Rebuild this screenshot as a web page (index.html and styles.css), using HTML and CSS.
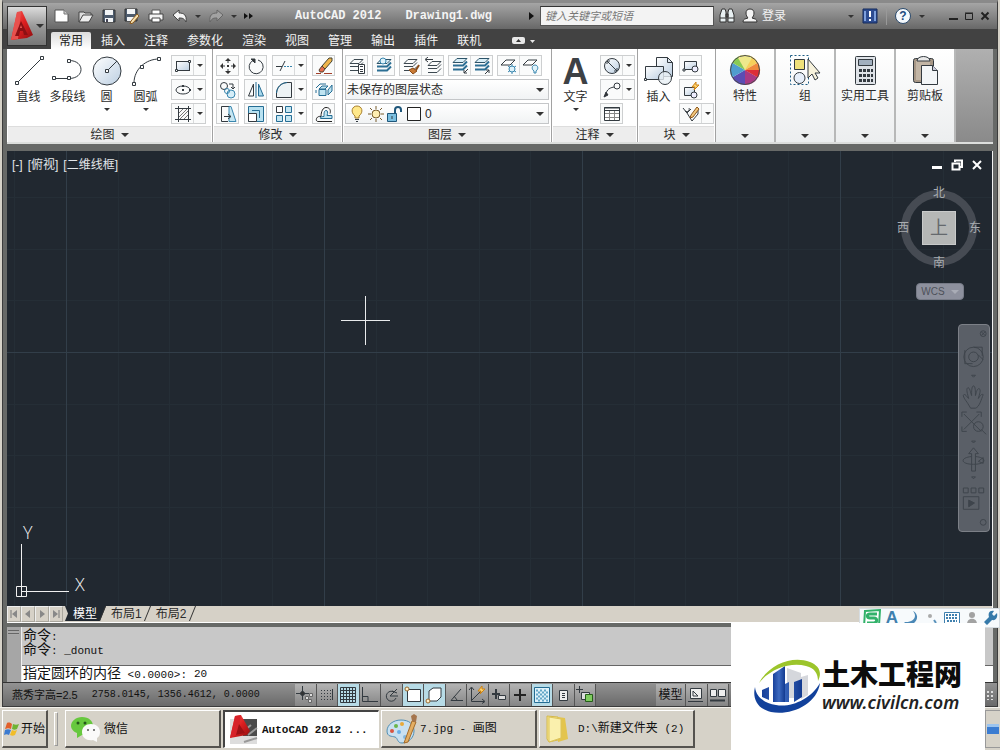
FILE: index.html
```html
<!DOCTYPE html>
<html lang="zh-CN">
<head>
<meta charset="utf-8">
<meta name="viewport" content="width=device-width, initial-scale=1">
<title>AutoCAD 2012 Drawing1.dwg</title>
<link rel="stylesheet" href="styles.css">
</head>
<body>
<svg class="defs" aria-hidden="true">
  <defs>
    <linearGradient id="blue" x1="0" y1="0" x2="1" y2="1"><stop offset="0" stop-color="#fff"/><stop offset="1" stop-color="#bccfe2"/></linearGradient>
    <linearGradient id="red" x1="0" y1="0" x2="1" y2="1"><stop offset="0" stop-color="#ff6058"/><stop offset=".5" stop-color="#dc1f20"/><stop offset="1" stop-color="#8d0d10"/></linearGradient>
    <linearGradient id="deep" x1="0" y1="0" x2="1" y2="0"><stop offset="0" stop-color="#17409a"/><stop offset=".5" stop-color="#3d6ac0"/><stop offset="1" stop-color="#123a90"/></linearGradient>
    <symbol id="layers" viewBox="0 0 18 18"><path d="M6 2.500h9l-4 4H2zM2 9.500h9l4-4M2 13.500h9l4-4" fill="none" stroke="#3c4850"/></symbol>
    <symbol id="layersblue" viewBox="0 0 18 18"><path d="M6 2.500h10l-4 4H2z" fill="#d8eef7" stroke="#2c5368"/><path d="M2 9.500h10l4-4M2 13.500h10l4-4" fill="none" stroke="#2c6f94" stroke-width="2"/></symbol>
  </defs>
</svg>

<div class="window">
  <header class="head">
    <button class="app-button" aria-label="应用程序菜单">
      <svg width="24" height="34" viewBox="0 0 24 34"><path d="M7 3l5-1 11 24-6 3-8 1-8 1z" fill="url(#red)"/><path d="M7 3l4 0-3 27-7 1z" fill="#e8504d"/><path d="M11 12l7 14h-4l-1-4h-3l-1 5H5z" fill="#8c1014"/><path d="M11 16l1 3h-2z" fill="#f06058"/></svg>
      <i class="down"></i>
    </button>
    <div class="title-bar">
      <div class="quick">
        <button aria-label="新建"><svg width="16" height="14" viewBox="0 0 16 14"><path d="M1 1h9l4 4v8H1z" fill="#fff" stroke="#555"/><path d="M10 1v4h4" fill="#ccc" stroke="#777"/></svg></button>
        <button aria-label="打开"><svg width="16" height="14" viewBox="0 0 16 14"><path d="M1 13V3h5l1 1h6v3" fill="#ddd" stroke="#444"/><path d="M1 13l4-7h10l-4 7z" fill="#eee" stroke="#444"/></svg></button>
        <button aria-label="保存"><svg width="14" height="14" viewBox="0 0 14 14"><path d="M1 1h12v12H1z" fill="#4d5b6d" stroke="#333"/><path d="M3 1h8v5H3zM3 9h8v4H3z" fill="#f2f4f6"/><path d="M4 10h2v3H4z" fill="#445"/></svg></button>
        <button aria-label="另存为"><svg width="16" height="16" viewBox="0 0 16 16"><path d="M1 1h12v12H1z" fill="#4d5b6d" stroke="#333"/><path d="M3 1h8v5H3zM3 9h8v4H3z" fill="#f2f4f6"/><path d="M7 13l6-7 2 2-6 7-3 1z" fill="#f4dfae" stroke="#8a5a20"/></svg></button>
        <button aria-label="打印"><svg width="16" height="14" viewBox="0 0 16 14"><path d="M4 1h8v5H4z" fill="#fff" stroke="#555"/><path d="M1 5h14v6H1z" fill="#f3f3f3" stroke="#444"/><path d="M4 9h8v4H4z" fill="#fff" stroke="#444"/></svg></button>
        <button aria-label="放弃"><svg width="16" height="14" viewBox="0 0 16 14"><path d="M1 6l6-5v3c5 0 8 2 7 9-2-4-4-4-7-4v3z" fill="#f4f4f4" stroke="#444"/></svg></button>
        <i class="down tiny"></i>
        <button aria-label="重做"><svg width="16" height="14" viewBox="0 0 16 14"><path d="M15 6L9 1v3C4 4 1 6 2 13c2-4 4-4 7-4v3z" fill="#a2a2a2" stroke="#666"/></svg></button>
        <i class="down tiny"></i>
        <button aria-label="更多"><svg width="9" height="8" viewBox="0 0 9 8"><path d="M0 1l4 3-4 3zM5 1l4 3-4 3z" fill="#111"/></svg></button>
      </div>
      <h1 class="title"><span>AutoCAD 2012</span><span>Drawing1.dwg</span></h1>
      <i class="right"></i>
      <input class="search" type="search" aria-label="搜索" placeholder="键入关键字或短语">
      <div class="account">
        <button aria-label="查找"><svg width="16" height="16" viewBox="0 0 16 16"><path d="M3 1h3l1 3v10H1V7zM10 1h3l2 6v7H9V4z" fill="#e8f0f2" stroke="#333"/><path d="M7 6h2v3H7zM1 10h6M9 10h6" fill="#555" stroke="#333"/></svg></button>
        <button class="login"><svg width="16" height="16" viewBox="0 0 16 16"><path d="M8 1c3 0 4 2 4 4s-1 4-2 5c3 1 5 1 5 4H1c0-3 2-3 5-4-1-1-2-3-2-5s1-4 4-4z" fill="#f4f4f4" stroke="#333"/></svg>登录</button>
      </div>
      <div class="help">
        <i class="down tiny"></i>
        <button aria-label="交换"><svg width="16" height="16" viewBox="0 0 16 16"><path d="M1 1h14v14H1z" fill="#2d4c91" stroke="#152a5c"/><path d="M3 3v10M13 3v10" stroke="#7da0dd" stroke-width="2"/><path d="M7 3h2v6H7zM7 11h2v2H7z" fill="#fff"/></svg></button>
        <i class="bar"></i>
        <button class="ask" aria-label="帮助">?</button>
        <i class="down tiny"></i>
      </div>
      <div class="win-controls">
        <button aria-label="最小化"><svg width="10" height="10"><path d="M1 8h9" stroke="#222" stroke-width="2"/></svg></button>
        <button aria-label="最大化"><svg width="10" height="10"><path d="M1.500 2.500h7v6h-7zM1 2h8" fill="none" stroke="#222"/></svg></button>
        <button aria-label="关闭"><svg width="10" height="10"><path d="M1.500 1.500l7 7M8.500 1.500l-7 7" stroke="#222" stroke-width="2"/></svg></button>
      </div>
    </div>
    <nav class="tabs">
      <button class="tab current">常用</button><button class="tab">插入</button><button class="tab">注释</button><button class="tab">参数化</button><button class="tab">渲染</button><button class="tab">视图</button><button class="tab">管理</button><button class="tab">输出</button><button class="tab">插件</button><button class="tab">联机</button>
      <button class="fold" aria-label="最小化功能区"><svg width="26" height="10" viewBox="0 0 26 10"><rect x="1" y="1" width="13" height="7" rx="2" fill="#e8e8e8"/><path d="M5 6l2.500-3L10 6z" fill="#333"/><path d="M19 4h5l-2.500 3z" fill="#e8e8e8"/></svg></button>
    </nav>
  </header>

  <section class="ribbon">
    <div class="panel">
      <div class="panel-body">
        <button class="big"><svg width="32" height="32" viewBox="0 0 32 32" class="ln"><path d="M4 28L29 3"/><path class="n" d="M2.500 26.500h3v3h-3zM27.500 1.500h3v3h-3z"/></svg>直线</button>
        <button class="big"><svg width="32" height="32" viewBox="0 0 32 32" class="ln"><path d="M2 23.500h15c16 0 16-18 0-18"/><path class="n" d="M.500 21.500h3v3h-3zM15.500 21.500h3v3h-3zM15.500 4.500h3v3h-3z"/></svg>多段线</button>
        <button class="big"><svg width="32" height="32" viewBox="0 0 32 32" class="ln"><circle cx="16" cy="16" r="14" fill="url(#blue)"/><path d="M16 16L26 6"/><path class="n" d="M14.500 14.500h3v3h-3z"/></svg>圆<i class="down tiny"></i></button>
        <button class="big"><svg width="32" height="32" viewBox="0 0 32 32" class="ln"><path d="M4 28C4 14 16 4 29 4"/><path class="n" d="M2.500 27.500h3v3h-3zM10.500 10.500h3v3h-3zM27.500 2.500h3v3h-3z"/></svg>圆弧<i class="down tiny"></i></button>
        <div class="stack">
          <span class="split"><button aria-label="矩形"><svg width="18" height="18" class="ln"><rect x="2.500" y="4.500" width="13" height="9" fill="url(#blue)"/><path class="n" d="M1.500 12.500h2v2h-2zM14.500 3.500h2v2h-2z"/></svg></button><button aria-label="矩形选项"><i class="down tiny"></i></button></span>
          <span class="split"><button aria-label="椭圆"><svg width="18" height="18" class="ln"><ellipse cx="9" cy="9" rx="7" ry="4"/><path d="M8 9h2M9 8v2M16 8v2M8 5h2" stroke-width="2"/></svg></button><button aria-label="椭圆选项"><i class="down tiny"></i></button></span>
          <span class="split"><button aria-label="图案填充"><svg width="18" height="18" class="ln"><path d="M4.500 1v16M14.500 1v16M1 3.500h16M1 14.500h16"/><path d="M5 8l4-4M5 12l8-8M6 14l8-8M10 14l4-4" stroke="#777"/></svg></button><button aria-label="填充选项"><i class="down tiny"></i></button></span>
        </div>
      </div>
      <button class="panel-name">绘图 <i class="down"></i></button>
    </div>

    <div class="panel">
      <div class="panel-body modify">
        <div class="stack">
          <span class="split"><button aria-label="移动"><svg width="18" height="18" class="ln"><path d="M9 2v4M9 12v4M2 9h4M12 9h4"/><path d="M9 1l3 3H6zM9 17l3-3H6zM1 9l3-3v6zM17 9l-3-3v6zM8 8h2v2H8z" fill="#333" stroke="none"/></svg></button></span>
          <span class="split"><button aria-label="复制"><svg width="18" height="18" class="ln"><circle cx="5" cy="5" r="3.500"/><circle cx="12" cy="13" r="4" stroke="#3986ae" fill="#d6eef8"/><circle cx="8" cy="10" r="2.500" stroke="#3986ae"/><path d="M10 3h4v4M12 6l2 2 2-2"/></svg></button></span>
          <span class="split"><button aria-label="拉伸"><svg width="18" height="18" class="ln"><path d="M10 1.500H2.500v15H9"/><path d="M10 1.500h2l5 15h-7z" fill="#c5e6f2" stroke="#3986ae"/><path d="M5 11.500h7M9 9l3 2.500L9 14"/></svg></button></span>
        </div>
        <div class="stack">
          <span class="split"><button aria-label="旋转"><svg width="18" height="18" class="ln"><path d="M6 3.500a7 7 0 1 0 5-.500"/><path d="M4 2h4v4z" fill="#333"/></svg></button></span>
          <span class="split"><button aria-label="镜像"><svg width="18" height="18" class="ln"><path d="M6.500 3v12H1.500z"/><path d="M11.500 3v12h5z" fill="#a8d8ec" stroke="#246d94"/><path d="M9 1v16" stroke="#246d94"/></svg></button></span>
          <span class="split"><button aria-label="缩放"><svg width="18" height="18" class="ln"><path d="M1.500 1.500h15v15h-15z" fill="#b9e2f1" stroke="#246d94"/><path d="M1.500 8.500h8v8h-8z" fill="#fff"/><path d="M5 5.500h7.500V13" stroke="#246d94"/></svg></button></span>
        </div>
        <div class="stack">
          <span class="split"><button aria-label="修剪"><svg width="18" height="18" class="ln"><path d="M1 9.500h6"/><path d="M9 9.500h9" stroke="#3986ae" stroke-dasharray="2 1"/><path d="M5 14l5-10"/></svg></button><button aria-label="修剪选项"><i class="down tiny"></i></button></span>
          <span class="split"><button aria-label="圆角"><svg width="18" height="18" class="ln"><path d="M1.500 16.500V12C2 6 6 2 12 1.500h4.500v15z" fill="#edf3f5"/><path d="M1.500 12C2 6 6 2 12 1.500" stroke="#246d94"/></svg></button><button aria-label="圆角选项"><i class="down tiny"></i></button></span>
          <span class="split"><button aria-label="阵列"><svg width="18" height="18" class="ln"><path d="M1.500 1.500h6v6h-6z" fill="#fff"/><path d="M10.500 1.500h6v6h-6zM1.500 10.500h6v6h-6zM10.500 10.500h6v6h-6z" fill="#c5e6f2" stroke="#246d94"/></svg></button><button aria-label="阵列选项"><i class="down tiny"></i></button></span>
        </div>
        <div class="stack">
          <span class="split"><button aria-label="删除"><svg width="18" height="18" class="ln"><path d="M1 16.500h5M9 16.500h8" stroke="#a3402a"/><path d="M14 1h3v3l-7 8-3-3z" fill="#efb54c" stroke="#443"/><path d="M7 9l3 3-2 3H5l-1-2z" fill="#e66d4d" stroke="#543"/></svg></button></span>
          <span class="split"><button aria-label="分解"><svg width="18" height="18" class="ln"><path d="M4 8l3-3h6l-3 3zM13 9l4-5v6l-4 4zM4 8.500h7v6H4z" fill="#bfe4f1" stroke="#246d94"/><path d="M1 7l4-4h6M1 12V9" stroke="#246d94"/></svg></button></span>
          <span class="split"><button aria-label="偏移"><svg width="18" height="18" class="ln"><path d="M17 16.500H3c-3 0-2-6 3-5 0-5 2-9 5-9 4 0 5 3 4 6" stroke="#222"/><path d="M17 13.500H6c-2 0-1-2 3-2 0-3 0-6 2-6s2 2 1 5h5z" fill="#bfe4f1" stroke="#246d94"/></svg></button></span>
        </div>
      </div>
      <button class="panel-name">修改 <i class="down"></i></button>
    </div>

    <div class="panel">
      <div class="panel-body layer">
        <div class="layer-tools">
          <span class="split"><button aria-label="图层特性"><svg width="18" height="18" class="ln"><use href="#layers"/><path d="M10.500 7.500h6v9h-6z" fill="#fff"/><path d="M12 9.500h3M12 12.500h3M12 14.500h3"/></svg></button></span>
          <span class="split"><button aria-label="置为当前"><svg width="18" height="18" class="ln"><use href="#layersblue"/><circle cx="8" cy="4" r="3" fill="#dff2fa" stroke="#3986ae"/></svg></button></span>
          <span class="split"><button aria-label="匹配"><svg width="18" height="18" class="ln"><use href="#layers"/><path d="M7 13l4-2 4 3-4 3z" fill="#c97a35" stroke="#8a4d1b"/><path d="M14 13l3-5" stroke="#8a4d1b" stroke-width="2"/></svg></button><button aria-label="上一个"><svg width="18" height="18" class="ln"><use href="#layers" x="2" y="2"/><path d="M9 2.500H2M4 0L1 2.500 4 5"/></svg></button></span>
          <span class="split"><button aria-label="隔离"><svg width="18" height="18" class="ln"><use href="#layersblue" y="-1"/><path d="M17 12l-4 4M13 13v3h3"/></svg></button><button aria-label="取消隔离"><svg width="18" height="18" class="ln"><use href="#layersblue" y="-1"/><path d="M12 17l4-4M13 13h3v3"/></svg></button></span>
          <span class="split"><button aria-label="冻结"><svg width="18" height="18" class="ln"><path d="M6 3h9l-5 5H1z" fill="#fff"/><path d="M12 7v10M8 9l8 6M16 9l-8 6" stroke="#3986ae"/><circle cx="12" cy="12" r="3" fill="#dff2fa" stroke="#3986ae"/></svg></button><button aria-label="关闭图层"><svg width="18" height="18" class="ln"><path d="M6 3h9l-5 5H1z" fill="#fff"/><path d="M12 16v-2c-3-2-2-6 1-6s4 4 1 6v2z" fill="#dff2fa" stroke="#3986ae"/></svg></button></span>
        </div>
        <div class="combo"><select aria-label="图层状态"><option>未保存的图层状态</option></select><i class="down"></i></div>
        <div class="combo">
          <svg width="78" height="18" viewBox="0 0 78 18" class="ln"><path d="M9 13v-2C4 7 6 1 11 1s7 6 2 10v2z" fill="#ffe88a" stroke="#a87f2c"/><path d="M9 14.500h4M10 16.500h2"/><circle cx="30" cy="9" r="4" fill="#ffeeb0" stroke="#775b2b"/><path d="M30 1v3M30 14v3M22 9h3M35 9h3M24 3l2 2M34 13l2 2M24 15l2-2M34 5l2-2" stroke="#775b2b"/><path d="M41.500 8.500h9v8h-9z" fill="#7bbfe0" stroke="#1e567a"/><path d="M49 8V5c0-4 6-4 6 0v2" stroke="#1e567a" stroke-width="2"/><path d="M46 11v3"/><path d="M61.500 2.500h13v13h-13z" fill="#fff" stroke="#222"/></svg>
          <select aria-label="图层"><option>0</option></select><i class="down"></i>
        </div>
      </div>
      <button class="panel-name">图层 <i class="down"></i></button>
    </div>

    <div class="panel">
      <div class="panel-body note">
        <button class="big"><b class="letter">A</b>文字<i class="down tiny"></i></button>
        <div class="stack">
          <span class="split"><button aria-label="直径"><svg width="18" height="18" class="ln"><circle cx="9" cy="9" r="7.500" fill="url(#blue)"/><path d="M4 4l10 10M4 7V4h3M11 14h3v-3"/></svg></button><button aria-label="标注选项"><i class="down tiny"></i></button></span>
          <span class="split"><button aria-label="引线"><svg width="18" height="18" class="ln"><path d="M3 15c0-5 2-8 8-9"/><path d="M1 16l2-5 2 3z" fill="#333"/><circle cx="14" cy="5" r="3"/></svg></button><button aria-label="引线选项"><i class="down tiny"></i></button></span>
          <span class="split"><button aria-label="表格"><svg width="18" height="18" class="ln"><path d="M1.500 2.500h15v13h-15z" fill="#fff"/><path d="M2 8.500h14M2 12.500h14M6.500 5v10M11.500 5v10" stroke="#888"/><path d="M1.500 5.500h15M1 3h16"/></svg></button></span>
        </div>
      </div>
      <button class="panel-name">注释 <i class="down"></i></button>
    </div>

    <div class="panel">
      <div class="panel-body block">
        <button class="big"><svg width="32" height="32" viewBox="0 0 32 32" class="ln"><path d="M13.500 2.500h11l5 5v14h-16z" fill="url(#blue)"/><path d="M24.500 2.500v5h5"/><path d="M2.500 11.500h18v13h-18z" fill="url(#blue)"/><circle cx="22" cy="23" r="6.500" fill="#e9f0f5" fill-opacity=".8"/><path class="n" d="M1.500 23.500h2v2h-2z"/></svg>插入</button>
        <div class="stack">
          <span class="split"><button aria-label="创建块"><svg width="18" height="18" class="ln"><path d="M2.500 4.500h12v8h-12z" fill="url(#blue)"/><circle cx="13" cy="12" r="3" fill="#eef"/><path class="n" d="M1 12h2v2H1z"/></svg></button></span>
          <span class="split"><button aria-label="编辑块"><svg width="18" height="18" class="ln"><path d="M2.500 6.500h10v8h-10z" fill="url(#blue)"/><circle cx="12" cy="14" r="3" fill="#eef"/><path d="M14 1l-4 5h3l-1 3 5-5h-3z" fill="#ffd36b" stroke="#cb8115"/></svg></button></span>
          <span class="split"><button aria-label="编辑属性"><svg width="18" height="18" class="ln"><path d="M1 3l4 5 4-4M3 6c3 2 5-1 4-3M5 8l5 8 6-7V5"/><path d="M9 10l6-8 2 2-6 8-3 1z" fill="#f3c77c" stroke="#8c571c"/></svg></button><button aria-label="属性选项"><i class="down tiny"></i></button></span>
        </div>
      </div>
      <button class="panel-name">块 <i class="down"></i></button>
    </div>

    <button class="slim"><svg width="32" height="32" viewBox="0 0 32 32"><path d="M16 16V1a15 15 0 0 1 13 7.500z" fill="#f6d05a"/><path d="M16 16l13-7.500a15 15 0 0 1 0 15z" fill="#ef8a3d"/><path d="M16 16l13 7.500A15 15 0 0 1 16 31z" fill="#a83a84"/><path d="M16 16v15A15 15 0 0 1 3 23.500z" fill="#5b4db4"/><path d="M16 16L3 23.500a15 15 0 0 1 0-15z" fill="#4f9dce"/><path d="M16 16L3 8.500A15 15 0 0 1 16 1z" fill="#89ca54"/><path d="M16 16L8.500 3A15 15 0 0 1 23.500 3z" fill="#eee88b"/><path d="M16 16h15a15 15 0 0 1-2 7.500z" fill="#dc2f38"/><circle cx="16" cy="16" r="14.500" fill="none" stroke="#4b4b4b"/></svg>特性<i class="down"></i></button>
    <button class="slim"><svg width="32" height="32" viewBox="0 0 32 32" class="ln"><path d="M1.500 1.500h18v29h-18z" stroke="#1d5c85" stroke-dasharray="2 2"/><path d="M5.500 5.500h10v10h-10z" fill="#eee07a"/><circle cx="10.500" cy="24" r="5.500" fill="#e7effa"/><path d="M19 5v19l4-4 3 6 3-2-3-5h5z" fill="#f7f2dc"/></svg>组<i class="down"></i></button>
    <button class="slim"><svg width="32" height="32" viewBox="0 0 32 32" class="ln"><rect x="6.500" y="2.500" width="20" height="28" rx="1" fill="#dfe3e8"/><path d="M9.500 5.500h14v6h-14z" fill="#a2b0bf"/><path d="M10 16.500h14M10 21.500h14M10 26.500h14" stroke-width="3" stroke-dasharray="3 1"/></svg>实用工具<i class="down"></i></button>
    <button class="slim"><svg width="32" height="32" viewBox="0 0 32 32" class="ln"><rect x="4.500" y="4.500" width="20" height="24" rx="2" fill="#a79786"/><path d="M7 7h14v19H7z" fill="#c2b5a5" stroke="none"/><path d="M8 7c0-6 13-6 13 0z" fill="#e8e8e8"/><path d="M12.500 11.500h11l5 5v14h-16z" fill="#f3f6f8"/><path d="M23.500 11.500v5h5" fill="#ccd"/></svg>剪贴板<i class="down"></i></button>
    <div class="ribbon-rest"></div>
  </section>

  <main class="drawing">
    <svg class="grid" width="100%" height="100%" aria-hidden="true">
      <defs><pattern id="cells" x="59" y="201" width="258" height="258" patternUnits="userSpaceOnUse"><path d="M52.500 0v258M103.500 0v258M155.500 0v258M206.500 0v258M0 52.500h258M0 103.500h258M0 155.500h258M0 206.500h258" stroke="#252e36"/><path d="M.500 0v258M0 .500h258" stroke="#323e49"/></pattern></defs>
      <rect width="100%" height="100%" fill="url(#cells)"/>
    </svg>
    <p class="view-name"><span>[-]</span><span>[俯视]</span><span>[二维线框]</span></p>
    <div class="view-controls">
      <button aria-label="最小化视图"><svg width="12" height="12"><path d="M1 8.500h10" stroke="#fff" stroke-width="3"/></svg></button>
      <button aria-label="还原视图"><svg width="12" height="12"><path d="M4 3V1.500h7V8H9M1.500 4.500h7v6h-7z" fill="none" stroke="#fff" stroke-width="2"/></svg></button>
      <button aria-label="关闭视图"><svg width="12" height="12"><path d="M2 2l8 8M10 2l-8 8" stroke="#fff" stroke-width="2"/></svg></button>
    </div>
    <div class="compass"><span class="north">北</span><span class="west">西</span><button class="cube">上</button><span class="east">东</span><span class="south">南</span></div>
    <button class="wcs">WCS <i class="down"></i></button>
    <div class="nav-bar">
      <svg width="30" height="206" viewBox="0 0 31 207" fill="none" stroke="#3e444c"><circle cx="25" cy="6" r="3"/><path d="M23 4l4 4M27 4l-4 4"/><circle cx="15" cy="30" r="10"/><circle cx="15" cy="30" r="5"/><path d="M6 23v14h8M15 20h9v9M20 28l5 5M13 49h4l-2 2z"/><path d="M9 78c-2-3-6-8-4-9s4 4 5 4c-1-4-3-10-1-11s3 5 4 8c0-4 0-10 2-10s2 6 2 10c1-4 2-8 4-7s0 6-1 10c2-3 3-5 5-4-2 5-4 13-8 14h-5z"/><path d="M5 89l18 18M21 89L5 105M3 92v-5h5M18 87h5v5M3 102v5h5"/><circle cx="20" cy="102" r="5"/><path d="M23 105l5 5M13 117h4l-2 2z"/><path d="M13 148v-18h-3l5-6 5 6h-3v18M13 148h4"/><path d="M13 133c-12 1-12 8 2 8s14-7 2-8M20 138l5-4v6zM13 154h4l-2 2zM4.500 165.500h5v5h-5zM12.500 165.500h5v5h-5zM20.500 165.500h5v5h-5zM4.500 174.500h16v13h-16z"/><path d="M10 178l6 3-6 4z" fill="#3e444c"/><circle cx="25" cy="201" r="3"/></svg>
    </div>
    <svg class="cross" width="49" height="49" aria-hidden="true"><path d="M24.500 0v49M0 24.500h49" stroke="#e9ebec"/></svg>
    <svg class="ucs" width="80" height="84" aria-hidden="true"><path d="M6.500 80V28M6 75.500h48M1.500 70.500h10v10h-10z" fill="none" stroke="#f0f0f0"/><text x="8" y="23">Y</text><text x="60" y="75">X</text></svg>
  </main>

  <nav class="sheets">
    <div class="sheet-nav">
      <button aria-label="第一个"><svg width="10" height="10"><path d="M2 1v8" stroke="#777"/><path d="M8 1v8L3 5z" fill="#888"/></svg></button><button aria-label="前一个"><svg width="10" height="10"><path d="M7 1v8L2 5z" fill="#888"/></svg></button><button aria-label="后一个"><svg width="10" height="10"><path d="M3 1v8l5-4z" fill="#888"/></svg></button><button aria-label="最后一个"><svg width="10" height="10"><path d="M8 1v8" stroke="#777"/><path d="M2 1v8l5-4z" fill="#888"/></svg></button>
    </div>
    <button class="sheet current">模型</button><button class="sheet">布局1</button><button class="sheet">布局2</button>
  </nav>

  <section class="command">
    <div class="grip"></div>
    <div class="console">
      <p>命令<span>:</span></p>
      <p>命令<span>: _donut</span></p>
      <div class="prompt"><label for="cmd">指定圆环的内径<span> &lt;0.0000&gt;:</span></label><input id="cmd" type="text" value="20"></div>
    </div>
  </section>

  <footer class="status">
    <div class="coords"><span>燕秀字高=2.5</span><code>2758.0145, 1356.4612, 0.0000</code></div>
    <div class="modes">
      <button aria-label="推断约束"><svg width="20" height="20" class="ln"><path d="M1 8.500h13M7.500 1v14"/><circle cx="7.500" cy="8.500" r="2" fill="#333"/><path d="M10.500 11.500h3v3h-3zM14.500 8.500h3v3h-3zM13.500 14.500h3v3h-3z" fill="#ddd" stroke="#666"/></svg></button>
      <button aria-label="捕捉"><svg width="20" height="20" class="ln"><path d="M4 5.500h12M4 8.500h12M4 11.500h12M4 14.500h12" stroke-dasharray="1 2"/><path d="M15.500 4v11"/></svg></button>
      <button class="on" aria-label="栅格"><svg width="20" height="20" class="ln"><path d="M2.500 2.500h15v15h-15zM5.500 2v15M8.500 2v15M11.500 2v15M14.500 2v15M2 5.500h15M2 8.500h15M2 11.500h15M2 14.500h15"/></svg></button>
      <button aria-label="正交"><svg width="20" height="20" class="ln"><path d="M2.500 2v14.500H18M2 11.500h6V16"/></svg></button>
      <button aria-label="极轴"><svg width="20" height="20" class="ln"><path d="M15 13a5 5 0 1 1-2-6M16 4l-7 7h8M11 6l5 2"/></svg></button>
      <button class="on" aria-label="对象捕捉"><svg width="20" height="20" class="ln"><path d="M4.500 4.500h13v12h-13z" fill="#fff"/><circle cx="4" cy="4" r="2" fill="#ffefcc" stroke="#9b6b2f"/></svg></button>
      <button class="on" aria-label="三维捕捉"><svg width="20" height="20" class="ln"><path d="M5 6l4-3h8v9l-4 4H5z" fill="#fff"/><circle cx="4" cy="16" r="2" fill="#ffefcc" stroke="#9b6b2f"/></svg></button>
      <button aria-label="追踪"><svg width="20" height="20" class="ln"><path d="M15 4L5 15.500h12M8 11l3 4"/></svg></button>
      <button aria-label="动态UCS"><svg width="20" height="20" class="ln"><path d="M4.500 3v13.500H17M4 16L14 6M2 5l2.500-3L7 5M15 14l3 2.500-3 2"/><path d="M15 1l-4 5h3l-1 3 5-5h-3z" fill="#ffd36b" stroke="#cb8115"/></svg></button>
      <button aria-label="动态输入"><svg width="20" height="20" class="ln"><path d="M7 4v10M3 9h8" stroke-width="2"/><path d="M9.500 10.500h7v4h-7z" fill="#ddd"/></svg></button>
      <button aria-label="线宽"><svg width="20" height="20"><path d="M10 4v12M4 10h12" stroke="#222" stroke-width="2"/></svg></button>
      <button class="on" aria-label="透明度"><svg width="20" height="20"><path d="M2.500 2.500h15v15h-15z" fill="#dff2fa" stroke="#246d94"/><path d="M4 5.500h12M4 9.500h12M4 13.500h12M6 7.500h10M6 11.500h10M6 15.500h10" stroke="#62a6c7" stroke-width="2" stroke-dasharray="2 2"/></svg></button>
      <button aria-label="快捷特性"><svg width="20" height="20" class="ln"><path d="M6.500 5.500h8v10h-8z" fill="#eee"/><path d="M9 8.500h3M9 10.500h3M9 12.500h3"/></svg></button>
      <button aria-label="选择循环"><svg width="20" height="20" class="ln"><path d="M4.500 1v7M1 4.500h7"/><path d="M6.500 7.500h8v7h-8z" fill="#ddd"/><path d="M10.500 9.500h7v7h-7z" fill="#7ecb5f" stroke="#255e18"/></svg></button>
    </div>
    <div class="space">
      <button class="model">模型</button>
      <button aria-label="布局"><svg width="20" height="20" class="ln"><path d="M4.500 3.500h11v10h-11z" fill="#eee"/><path d="M7 6v5h5zM2 16.500h15"/></svg></button>
      <button aria-label="快速查看"><svg width="20" height="20" class="ln"><path d="M2.500 4.500h6v7h-6zM10.500 4.500h7v7h-7z" fill="#eee"/><path d="M2 15.500h15" stroke-width="2"/></svg></button>
    </div>
    <i class="sizer"></i>
  </footer>
</div>

<footer class="taskbar">
  <button class="start"><svg width="16" height="16" viewBox="0 0 16 16"><path d="M3 2c2-1 4 0 5 1L7 8C5 7 4 7 1 8z" fill="#e2602b"/><path d="M9 3c2 1 4 1 6 0l-2 5c-2 1-3 1-5 0z" fill="#6fb434"/><path d="M1 9c2-1 4-1 6 0l-2 5c-2-1-3-1-5 0z" fill="#3c7bd0"/><path d="M8 9c2 1 3 1 5 0l-2 5c-2 1-3 1-5 0z" fill="#f1bd29"/></svg>开始</button>
  <i class="divider"></i>
  <div class="tasks">
    <button class="task"><svg width="32" height="28" viewBox="0 0 32 28"><path d="M12 2c7 0 11 4 11 9s-4 9-11 9l-5 3v-5c-3-1-6-4-6-7 0-5 5-9 11-9z" fill="#67c83e"/><circle cx="8" cy="8" r="1.500" fill="#25581b"/><circle cx="15" cy="8" r="1.500" fill="#25581b"/><path d="M21 9c5 0 9 3 9 8 0 3-1 5-3 6v4l-4-2c-6 1-11-2-11-8 0-5 4-8 9-8z" fill="#fafafa"/><circle cx="18" cy="15" r="1" fill="#555"/><circle cx="24" cy="15" r="1" fill="#555"/></svg>微信</button>
    <button class="task active"><svg width="32" height="30" viewBox="0 0 32 30"><path d="M2 4h27v25H2z" fill="#ddd"/><path d="M15 4h14v17H15z" fill="#4b4b4b"/><path d="M17 15l6-5M20 20l9-7M16 27l13-4" stroke="#999" stroke-width="2"/><path d="M7 1l6-1 9 16-3 4-6 1-11 2z" fill="url(#red)"/><path d="M7 1L2 23l8-4 3-19z" fill="#d72229"/><path d="M11 9l6 9-5 1-4 1z" fill="#9c1015"/></svg><b>AutoCAD 2012 ...</b></button>
    <button class="task"><svg width="32" height="32" viewBox="0 0 32 32"><path d="M15 7c8 0 13 4 13 11s-6 12-12 12c-5 0-4-5-7-6S1 24 1 18 7 7 15 7z" fill="#c9e0f0" stroke="#508fb5"/><circle cx="6" cy="18" r="2" fill="#d9533f"/><circle cx="10" cy="13" r="2" fill="#6ab54b"/><circle cx="16" cy="11" r="2" fill="#e9a93a"/><circle cx="13" cy="19" r="2" fill="#69aee7"/><circle cx="19" cy="24" r="2" fill="#85b7dd"/><path d="M18 30L26 8l4 1-8 20z" fill="#e4ae62" stroke="#a36b2a"/><path d="M26 8l-1-5 3-2 3 2-1 6z" fill="#a5754d"/></svg><span><code>7.jpg - </code>画图</span></button>
    <button class="task"><svg width="32" height="30" viewBox="0 0 32 30"><path d="M3 2l11 1v23l-9 2-2-3z" fill="#f5e58e" stroke="#d4b94b"/><path d="M14 3l7 1 3 21-10 3z" fill="#e3c44d"/><path d="M5 3l12 2v19l-12 4z" fill="#faf0ad" stroke="#dcc35b"/></svg><span><code>D:\</code>新建文件夹<code> (2)</code></span></button>
  </div>
  <div class="tray"><svg width="14" height="14"><path d="M1 2h12v10H1z" fill="#3b7cd1"/><path d="M1 2h12v3H1z" fill="#9cc4ee"/></svg></div>
</footer>

<aside class="ime">
  <svg width="18" height="18" viewBox="0 0 18 18"><path d="M2 2l15-1-1 15-15 2z" fill="#fff" stroke="#32b26a" stroke-width="2"/><path d="M14 5H7c-4 0-3 4 0 4h4c4 0 3 5 0 5H4" fill="none" stroke="#32b26a" stroke-width="3"/></svg>
  <span>A</span>
  <svg width="16" height="16"><path d="M10 1c5 6 0 12-9 11 4 5 14 2 13-6-1-3-2-4-4-5z" fill="#4a88b6"/></svg>
  <svg width="16" height="16"><circle cx="7" cy="6" r="2" fill="#aaa"/><path d="M11 10l2 3" stroke="#5a92bb" stroke-width="2"/></svg>
  <svg width="18" height="16"><path d="M1.500 2.500h15v11h-15z" fill="#fff" stroke="#3f80ae"/><path d="M3 5h12M3 8h12M4 11h10" stroke="#3f80ae" stroke-width="2" stroke-dasharray="2 1"/></svg>
  <svg width="14" height="16"><circle cx="7" cy="5" r="3" fill="#a2a2a2"/><path d="M2 14c0-7 10-7 10 0z" fill="#a2a2a2"/></svg>
  <svg width="16" height="16"><path d="M14 3l-3 3-2-2 2-3C6 0 5 4 6 7l-5 5 3 3 5-5c4 1 6-3 5-7z" fill="#377aaa"/></svg>
</aside>

<aside class="brand">
  <svg width="68" height="58" viewBox="0 0 68 58"><path d="M34 10l14 5v25H34zM48 19l7-2v20l-7 4z" fill="#d5d7dc"/><path d="M20 16l12-8v36H20z" fill="url(#deep)"/><path d="M9 32l7-3v13l-7-3zM32 26l4-2v20h-4zM41 24l8-3v18l-8 5z" fill="url(#deep)"/><path d="M6 25C16 6 40-3 57 4c10 4 12 11 8 19 0-7-3-13-12-15C38 4 18 10 6 25z" fill="#9cc52b"/><path d="M2 29c-3 12 3 22 16 25 19 4 46-7 49-29-9 16-29 25-44 22C11 45 3 39 2 29z" fill="#12419b"/></svg>
  <div class="brand-text"><strong>土木工程网</strong><a href="#">www.civilcn.com</a></div>
</aside>
</body>
</html>
```

FILE: styles.css
```css
* { box-sizing: border-box; }
body {
  margin: 0;
  min-height: 100vh;
  display: flex;
  flex-direction: column;
  position: relative;
  overflow: hidden;
  background: #d6d2c8;
  color: #2b2b2b;
  font: 12px/14px "Liberation Sans", "Noto Sans CJK SC", sans-serif;
}
button, input, select { font: inherit; color: inherit; border: 0; padding: 0; margin: 0; background: none; border-radius: 0; }
button { display: inline-flex; align-items: center; justify-content: center; white-space: nowrap; }
svg { flex: none; display: block; }
code { font: 11px/14px "Liberation Mono", monospace; white-space: pre; }
p, h1 { margin: 0; }
.defs { position: absolute; width: 0; height: 0; }
.ln { fill: none; stroke: #333a40; }
.ln .n { fill: #fff; }

.down { width: 0; height: 0; border: 4px solid transparent; border-top-color: #333; border-bottom: 0; }
.down.tiny { border-width: 3px; border-bottom: 0; }
.right { width: 0; height: 0; border: 4px solid transparent; border-left: 5px solid #111; border-right: 0; }

.window {
  flex: 1;
  display: flex;
  flex-direction: column;
  border: solid #3c3c3c;
  border-width: 3px 1px 1px;
  border-top-color: #8a8a8a;
  margin: 0 2px;
  padding: 0 4px;
  background: #676967;
}

/* Title bar and ribbon tabs */
.head {
  display: grid;
  grid-template-columns: 40px 1fr;
  grid-template-rows: 26px 20px;
  margin: 0 -4px;
  padding: 0 4px;
  background: linear-gradient(#a5a5a5, #686868 26px, #424242 26px);
}
.app-button {
  grid-row: span 2;
  height: 40px;
  margin-top: 3px;
  border: 1px solid #333;
  background: linear-gradient(#dcdcdc, #999 50%, #777);
  gap: 2px;
}
.title-bar { display: flex; align-items: center; padding-left: 7px; min-width: 0; }
.quick { display: flex; align-items: center; gap: 8px; width: 241px; flex: none; }
.quick .down { margin: 0 -1px; }
.title { display: flex; gap: 24px; flex: 1; font: bold 12px/16px "Liberation Mono", monospace; color: #f4f4f4; white-space: nowrap; }
.search { width: 174px; height: 20px; margin-left: 6px; padding: 0 4px; background: #f3f3f3; border: 1px solid #555; border-top-color: #333; font-style: italic; font-size: 11px; }
.search::placeholder { color: #777; }
.account { display: flex; gap: 7px; margin-left: 5px; flex: none; }
.login { gap: 4px; color: #f2f2f2; }
.help { display: flex; align-items: center; gap: 8px; margin-left: 62px; flex: none; }
.bar { width: 1px; height: 18px; background: #999; }
.ask { width: 16px; height: 16px; border: 1px solid #2b4a6c; border-radius: 50%; background: #f4f8fc; color: #1d4b80; font-weight: bold; }
.win-controls { display: flex; gap: 6px; margin: 0 3px 0 23px; flex: none; }

.tabs { display: flex; align-items: flex-end; padding-left: 4px; }
.tab { height: 17px; padding: 0 9px; margin-right: 1px; color: #f2f2f2; }
.tab.current { color: #222; background: linear-gradient(#dcdcdc, #fff); border-radius: 2px 2px 0 0; padding: 0 8px; }
.fold { height: 17px; margin-left: 20px; }

/* Ribbon */
.ribbon { display: flex; height: 95px; background: #fff; border-bottom: 2px solid #dcdedc; }
.panel { display: flex; flex-direction: column; border-right: 1px solid #a2a2a2; flex: none; }
.panel-body { flex: 1; display: flex; align-items: flex-start; padding: 6px 6px 0 2px; }
.panel-name { height: 16px; margin: 0 1px; background: #ededed; border-top: 1px solid #ddd; gap: 6px; }
.big { flex-direction: column; width: 39px; justify-content: flex-start; line-height: 20px; }
.big .down { margin-top: 1px; }
.letter { height: 32px; font: bold 36px/34px "Liberation Sans", sans-serif; color: #3d4145; }
.stack { display: grid; grid-auto-rows: 21px; gap: 3px; margin-left: 6px; align-items: stretch; justify-items: start; }
.split { display: inline-flex; border: 1px solid #cdcfd0; background: #fafbfb; height: 21px; }
.split button { width: 21px; }
.split button + button { width: 12px; border-left: 1px solid #d8dadb; }
.panel-body.modify { padding-right: 7px; }
.modify .stack { margin-left: 5px; }
.modify .stack:first-child { margin-left: 1px; }
.panel-body.layer { flex-direction: column; gap: 3px; padding-right: 2px; }
.layer-tools { display: flex; gap: 4px; }
.layer-tools .split button + button { width: 22px; }
.combo { display: flex; align-items: center; width: 204px; height: 21px; border: 1px solid #c4c6c8; padding-right: 4px; background: linear-gradient(#fff, #f1f3f4); }
.combo select { appearance: none; flex: 1; min-width: 0; height: 19px; padding-left: 1px; outline: 0; }
.panel-body.note { padding-left: 4px; padding-right: 2px; }
.note .stack { margin-left: 5px; }
.panel-body.block { padding-left: 1px; padding-right: 1px; }
.block .stack { margin-left: 1px; }
.slim { flex-direction: column; justify-content: flex-start; width: 60px; padding: 5px 0 4px; line-height: 20px; border-right: 2px solid #b7b8b8; background: linear-gradient(#fff, #eceeef); }
.slim .down { margin-top: auto; }
.ribbon-rest { flex: 1; background: linear-gradient(#b0b0b0, #8a8a8a); }

/* Drawing area */
.drawing { position: relative; flex: 1; margin-top: 7px; border-right: 1px solid #f3f3f3; background: #212830; }
.grid { position: absolute; inset: 0; }
.view-name { position: absolute; left: 5px; top: 7px; display: flex; gap: 5px; color: #e2e6ea; }
.view-controls { position: absolute; right: 9px; top: 8px; display: flex; gap: 8px; }
.compass {
  position: absolute; right: 15px; top: 39px; width: 76px; height: 76px;
  display: grid; place-items: center;
  border: 8px solid #464b53; border-radius: 50%;
}
.compass span { position: absolute; color: #a9adb1; }
.north { top: -12px; }
.south { bottom: -12px; }
.west { left: -12px; }
.east { right: -12px; }
.cube { width: 34px; height: 34px; background: #b5b7b6; border: 1px solid #c8caca; color: #65696d; font-size: 18px; }
.wcs { position: absolute; right: 28px; top: 132px; width: 48px; height: 17px; gap: 6px; border: 1px solid #777b87; border-radius: 4px; background: #8d909d; color: #4d5059; font-size: 10px; }
.wcs .down { border-top-color: #a9acb6; }
.nav-bar { position: absolute; right: 2px; top: 173px; border: 1px solid #7c8087; border-radius: 4px; background: #5a5f67; width: 32px; }
.cross { position: absolute; left: 334px; top: 145px; }
.ucs { position: absolute; left: 8px; bottom: 6px; }
.ucs text { fill: #f0f0f0; font: 300 18px "Open Sans", sans-serif; }

/* Sheet tabs */
.sheets { display: flex; height: 17px; background: #d6d1c7; border-bottom: 1px solid #fff; border-right: 1px solid #fff; }
.sheet-nav { display: flex; margin-right: 2px; }
.sheet-nav button { width: 14px; border: 1px solid #aaa79e; border-top-color: #eee; border-left-color: #eee; }
.sheet { position: relative; z-index: 0; height: 15px; padding: 0 6px 0 8px; }
.sheet::after { content: ""; position: absolute; z-index: -1; inset: 0 0 0 3px; border-right: 1px solid #333; transform: skewX(-22deg); }
.sheet.current { color: #fff; }
.sheet.current::after { background: #212830; }
.sheet.current::before { content: ""; position: absolute; z-index: -1; inset: 0 12px 0 3px; background: #212830; transform: skewX(22deg); }

/* Command line */
.command { display: flex; height: 55px; margin-top: 4px; background: #c8c8c8; color: #111; font-size: 14px; line-height: 15px; }
.grip { width: 14px; background: repeating-linear-gradient(#666, #666 1px, #aaa 1px, #aaa 3px) 1px 3px / 11px 5px no-repeat #a6a6a6; }
.console { flex: 1; padding-top: 1px; border-left: 1px solid #eee; display: flex; flex-direction: column; }
.console p { height: 14px; padding-left: 1px; white-space: nowrap; }
.console span, .prompt input { font: 11px/15px "Liberation Mono", monospace; white-space: pre; }
.prompt { display: flex; align-items: center; height: 17px; margin-top: auto; padding-left: 1px; background: #fff; border-top: 1px solid #666; }
.prompt input { flex: 1; padding-left: 7px; outline: 0; }

/* Status bar */
.status { display: flex; align-items: center; height: 24px; margin: 0 -4px; border-top: 1px solid #333; background: linear-gradient(#929292, #6a6a6a); color: #111; }
.coords { display: flex; align-items: center; gap: 14px; padding-left: 9px; width: 292px; font-size: 11px; white-space: nowrap; }
.coords code { font-size: 10px; }
.modes { display: flex; width: 301px; height: 22px; }
.modes button, .space button { flex: 1; border-right: 1px solid #555; background: linear-gradient(#b3b3b3, #858585); overflow: hidden; }
.modes .on { background: #b7dbe6; }
.space { display: flex; width: 73px; height: 22px; margin-left: 60px; }
.space .model { flex: none; width: 30px; }
.sizer { margin-left: auto; width: 8px; height: 10px; margin-right: 3px; background: radial-gradient(circle, #ddd 1px, transparent 1px) 0 0 / 4px 4px; }

/* Task bar */
.taskbar { display: flex; align-items: center; height: 43px; padding: 0 0 0 2px; border-top: 1px solid #f4f2ec; color: #111; }
.start, .task { height: 38px; border: solid; border-width: 1px 2px 2px 1px; border-color: #fff #55534f #55534f #fff; background: #d6d2c8; }
.start { width: 46px; gap: 1px; }
.divider { width: 4px; height: 34px; margin: 0 7px 0 6px; border: 1px solid #999; border-color: #fff #999 #999 #fff; }
.tasks { display: flex; gap: 2px; }
.task { width: 156px; justify-content: flex-start; gap: 2px; padding-left: 4px; }
.task b { font: bold 11px/14px "Liberation Mono", monospace; }
.task.active { background: #fff; border-color: #444 #fff #fff #444; border-width: 2px 1px 1px 2px; padding-left: 3px; }
.tray { margin-left: auto; display: flex; align-items: center; width: 15px; height: 38px; border: 1px solid #999; border-right: 0; }

/* Floating input bar and site badge */
.ime { position: absolute; right: 0; top: 608px; display: flex; align-items: center; gap: 4px; width: 141px; height: 20px; padding-left: 3px; background: #f7fafc; border: 1px solid #d6dde2; }
.ime span { width: 16px; text-align: center; font: bold 17px/18px "Liberation Sans", sans-serif; color: #3f80ae; }
.brand { position: absolute; right: 15px; bottom: 0; display: flex; align-items: flex-start; width: 254px; height: 127px; padding: 35px 0 0 22px; background: #fff; }
.brand-text { display: flex; flex-direction: column; padding: 3px 0 0 1px; }
.brand strong { font: 900 28px/30px "Liberation Sans", "Noto Sans CJK SC", sans-serif; color: #0c0c0c; white-space: nowrap; }
.brand a { font: italic 600 18px/22px "Noto Sans", sans-serif; color: #222; text-decoration: none; }
```
